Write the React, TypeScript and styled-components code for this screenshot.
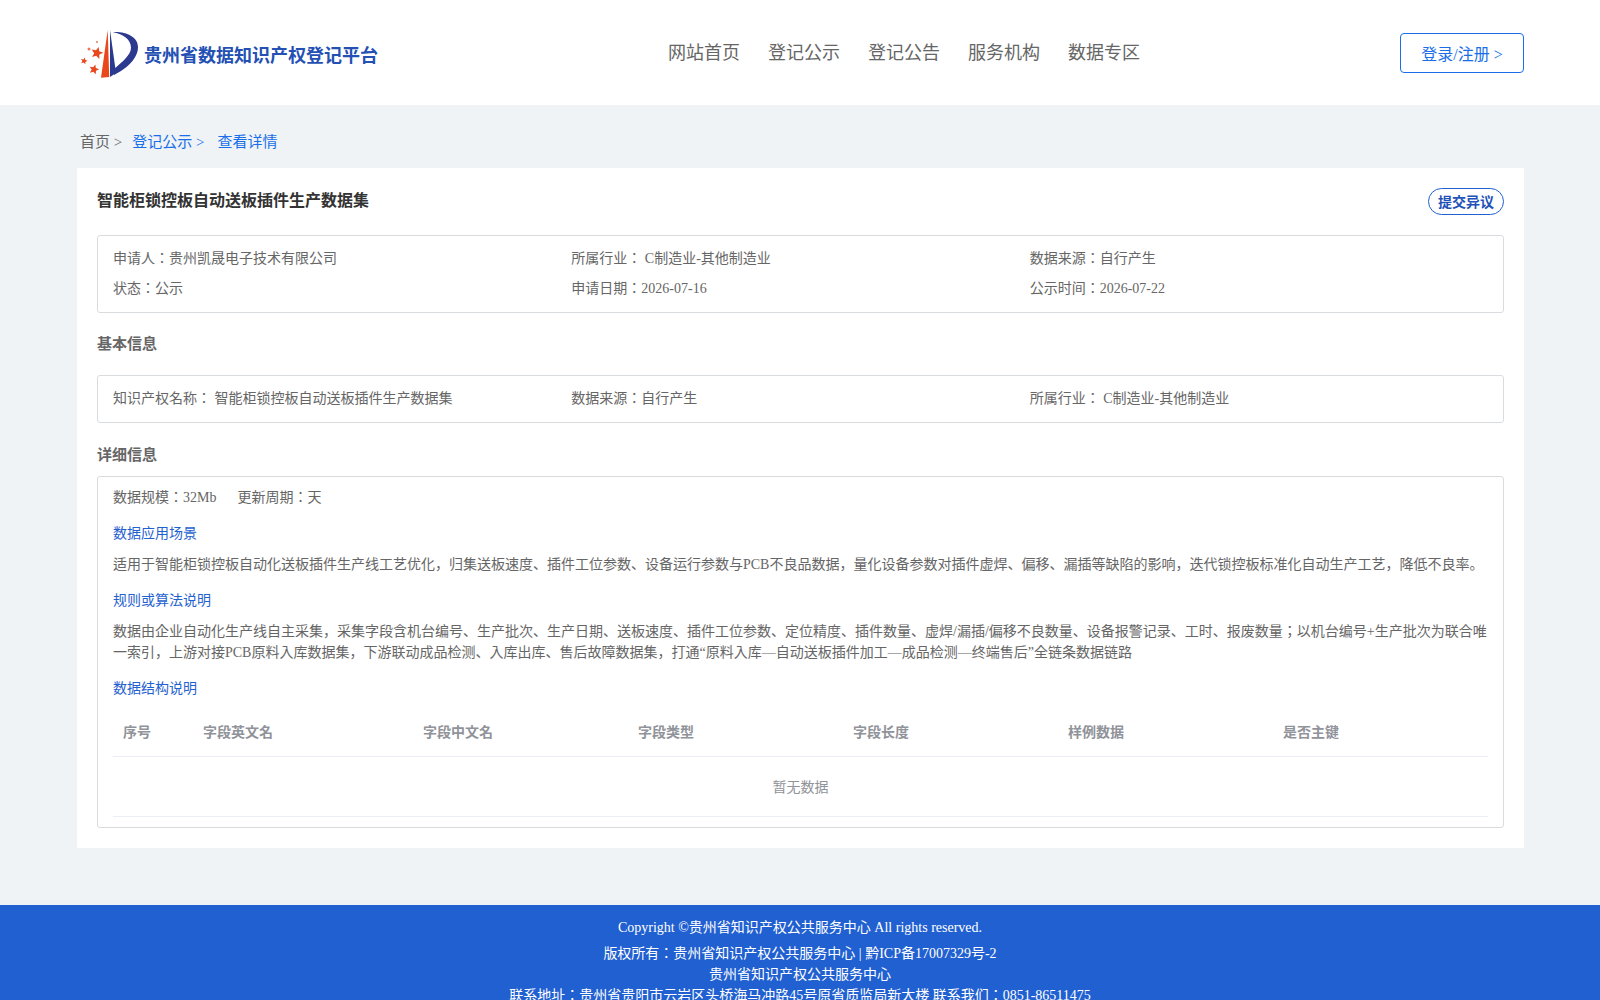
import styled, { createGlobalStyle } from "styled-components";

const GlobalStyle = createGlobalStyle`
  html, body {
    margin: 0;
    padding: 0;
    background: #eff3f6;
    font-family: "Liberation Serif", "Noto Sans CJK JP", serif;
    font-size: 14px;
    color: #666;
  }
`;

const Header = styled.header`
  height: 105px;
  background: #fff;
  display: flex;
  align-items: center;
  justify-content: space-between;
  padding: 0 76px 0 80px;
`;

const Brand = styled.div`
  display: flex;
  align-items: center;
  gap: 6px;
  width: 328px;
  padding-top: 2px;
`;

const BrandName = styled.span`
  font-size: 18px;
  font-weight: 700;
  color: #2450b4;
  white-space: nowrap;
`;

const Nav = styled.nav`
  display: flex;
  gap: 28px;
  font-size: 18px;
  color: #666;
  padding-bottom: 4px;
`;

const LoginButton = styled.button`
  width: 124px;
  height: 40px;
  border: 1px solid #1a6fe8;
  border-radius: 4px;
  background: #fff;
  color: #1a6fe8;
  font: inherit;
  font-size: 16px;
`;

const Breadcrumb = styled.div`
  height: 63px;
  margin: 0 76px 0 80px;
  display: flex;
  align-items: center;
  font-size: 15px;
  padding-top: 7px;
  box-sizing: border-box;
`;

const Crumb = styled.span<{ $active?: boolean; $gap?: number }>`
  color: ${(p) => (p.$active ? "#1a6fe8" : "#666")};
  margin-right: ${(p) => p.$gap ?? 0}px;
`;

const Card = styled.main`
  margin: 0 76px 0 77px;
  background: #fff;
  padding: 20px;
`;

const TitleRow = styled.div`
  display: flex;
  justify-content: space-between;
  align-items: flex-start;
  height: 47px;
`;

const Title = styled.h1`
  margin: 1px 0 0;
  font-size: 16px;
  font-weight: 700;
  line-height: 24px;
  color: #333;
`;

const ObjectionButton = styled.button`
  width: 76px;
  height: 27px;
  padding: 0 0 2px;
  border: 1px solid #2160d0;
  border-radius: 14px;
  background: #fff;
  color: #2152b8;
  font: inherit;
  font-size: 14px;
  font-weight: 700;
`;

const InfoBox = styled.section`
  border: 1px solid #d9dcdf;
  border-radius: 3px;
  padding: 8px 15px;
`;

const DetailBox = styled(InfoBox)`
  padding: 0 15px 10px;
`;

const InfoGrid = styled.div`
  display: grid;
  grid-template-columns: repeat(3, 1fr);
  line-height: 30px;
`;

const SectionTitle = styled.h2`
  margin: 0;
  height: 62px;
  padding-bottom: 3px;
  box-sizing: border-box;
  display: flex;
  align-items: center;
  font-size: 15px;
  font-weight: 700;
  color: #666;
`;

const DetailTitle = styled(SectionTitle)`
  height: 53px;
  padding: 7px 0 0;
`;

const MetaLine = styled.div`
  display: flex;
  gap: 21px;
  line-height: 20px;
  margin: 11px 0 1px;
`;

const SubTitle = styled.div`
  color: #1f62cf;
  line-height: 20px;
  margin-top: 16px;
`;

const Paragraph = styled.p`
  margin: 10px 0 0;
  line-height: 21px;
`;

const Table = styled.table`
  width: 100%;
  margin-top: 11px;
  border-collapse: collapse;
  table-layout: fixed;
`;

const HeadCell = styled.th<{ $width?: number }>`
  box-sizing: border-box;
  width: ${(p) => (p.$width ? `${p.$width}px` : "auto")};
  height: 46px;
  padding: 0 10px 3px;
  border-bottom: 1px solid #ebeef5;
  text-align: left;
  font-weight: 700;
  color: #909399;
`;

const EmptyCell = styled.td`
  height: 59px;
  padding: 0;
  border-bottom: 1px solid #ebeef5;
  text-align: center;
  color: #909399;
`;

const Footer = styled.footer`
  margin-top: 57px;
  background: #2160d0;
  color: #fff;
  padding: 12px 0 10px;
  text-align: center;
  line-height: 21px;
`;

const Copyright = styled.div`
  margin-bottom: 5px;
`;

const starPoints = (cx: number, cy: number, r: number, tilt: number) =>
  Array.from({ length: 10 }, (_, i) => {
    const radius = i % 2 === 0 ? r : r * 0.45;
    const angle = ((i * 36 - 90 + tilt) * Math.PI) / 180;
    return `${(cx + radius * Math.cos(angle)).toFixed(2)},${(cy + radius * Math.sin(angle)).toFixed(2)}`;
  }).join(" ");

const Logo = () => (
  <svg width="58" height="50" viewBox="0 0 58 50">
    <path d="M27.7 1 L21 48.7 L29.2 48 Z" fill="#e8481c" />
    <path d="M30 1 L30 48 L36 44 Z" fill="#2b3a8f" />
    <path
      d="M33 3.2 C46 2.4 58 8 58 18 C58 30 46 40 34 46 L34 40 C42 33 51 26 51 18.7 C51 10 43 5 33 3.2 Z"
      fill="#2b3a8f"
    />
    <polygon points={starPoints(17, 24, 6.3, 15)} fill="#e8481c" />
    <polygon points={starPoints(4, 32, 3.6, 15)} fill="#e8481c" />
    <polygon points={starPoints(14, 40.5, 5.2, 15)} fill="#e8481c" />
    <circle cx="9" cy="20" r="1.5" fill="#e8785c" />
    <circle cx="17" cy="13" r="1" fill="#e8785c" />
  </svg>
);

const columns = [
  { name: "序号", width: 80 },
  { name: "字段英文名", width: 220 },
  { name: "字段中文名" },
  { name: "字段类型" },
  { name: "字段长度" },
  { name: "样例数据" },
  { name: "是否主键" },
];

export default function App() {
  return (
    <>
      <GlobalStyle />
      <Header>
        <Brand>
          <Logo />
          <BrandName>贵州省数据知识产权登记平台</BrandName>
        </Brand>
        <Nav>
          <span>网站首页</span>
          <span>登记公示</span>
          <span>登记公告</span>
          <span>服务机构</span>
          <span>数据专区</span>
        </Nav>
        <LoginButton>登录/注册 &gt;</LoginButton>
      </Header>
      <Breadcrumb>
        <Crumb $gap={10}>首页 &gt;</Crumb>
        <Crumb $active $gap={13}>登记公示 &gt;</Crumb>
        <Crumb $active>查看详情</Crumb>
      </Breadcrumb>
      <Card>
        <TitleRow>
          <Title>智能柜锁控板自动送板插件生产数据集</Title>
          <ObjectionButton>提交异议</ObjectionButton>
        </TitleRow>
        <InfoBox>
          <InfoGrid>
            <span>申请人：贵州凯晟电子技术有限公司</span>
            <span>所属行业： C制造业-其他制造业</span>
            <span>数据来源：自行产生</span>
            <span>状态：公示</span>
            <span>申请日期：2026-07-16</span>
            <span>公示时间：2026-07-22</span>
          </InfoGrid>
        </InfoBox>
        <SectionTitle>基本信息</SectionTitle>
        <InfoBox>
          <InfoGrid>
            <span>知识产权名称： 智能柜锁控板自动送板插件生产数据集</span>
            <span>数据来源：自行产生</span>
            <span>所属行业： C制造业-其他制造业</span>
          </InfoGrid>
        </InfoBox>
        <DetailTitle>详细信息</DetailTitle>
        <DetailBox>
          <MetaLine>
            <span>数据规模：32Mb</span>
            <span>更新周期：天</span>
          </MetaLine>
          <SubTitle>数据应用场景</SubTitle>
          <Paragraph>
            适用于智能柜锁控板自动化送板插件生产线工艺优化，归集送板速度、插件工位参数、设备运行参数与PCB不良品数据，量化设备参数对插件虚焊、偏移、漏插等缺陷的影响，迭代锁控板标准化自动生产工艺，降低不良率。
          </Paragraph>
          <SubTitle>规则或算法说明</SubTitle>
          <Paragraph>
            数据由企业自动化生产线自主采集，采集字段含机台编号、生产批次、生产日期、送板速度、插件工位参数、定位精度、插件数量、虚焊/漏插/偏移不良数量、设备报警记录、工时、报废数量；以机台编号+生产批次为联合唯一索引，上游对接PCB原料入库数据集，下游联动成品检测、入库出库、售后故障数据集，打通“原料入库—自动送板插件加工—成品检测—终端售后”全链条数据链路
          </Paragraph>
          <SubTitle>数据结构说明</SubTitle>
          <Table>
            <thead>
              <tr>
                {columns.map((c) => (
                  <HeadCell key={c.name} $width={c.width}>
                    {c.name}
                  </HeadCell>
                ))}
              </tr>
            </thead>
            <tbody>
              <tr>
                <EmptyCell colSpan={columns.length}>暂无数据</EmptyCell>
              </tr>
            </tbody>
          </Table>
        </DetailBox>
      </Card>
      <Footer>
        <Copyright>Copyright ©贵州省知识产权公共服务中心 All rights reserved.</Copyright>
        <div>版权所有：贵州省知识产权公共服务中心 | 黔ICP备17007329号-2</div>
        <div>贵州省知识产权公共服务中心</div>
        <div>联系地址：贵州省贵阳市云岩区头桥海马冲路45号原省质监局新大楼 联系我们：0851-86511475</div>
      </Footer>
    </>
  );
}
